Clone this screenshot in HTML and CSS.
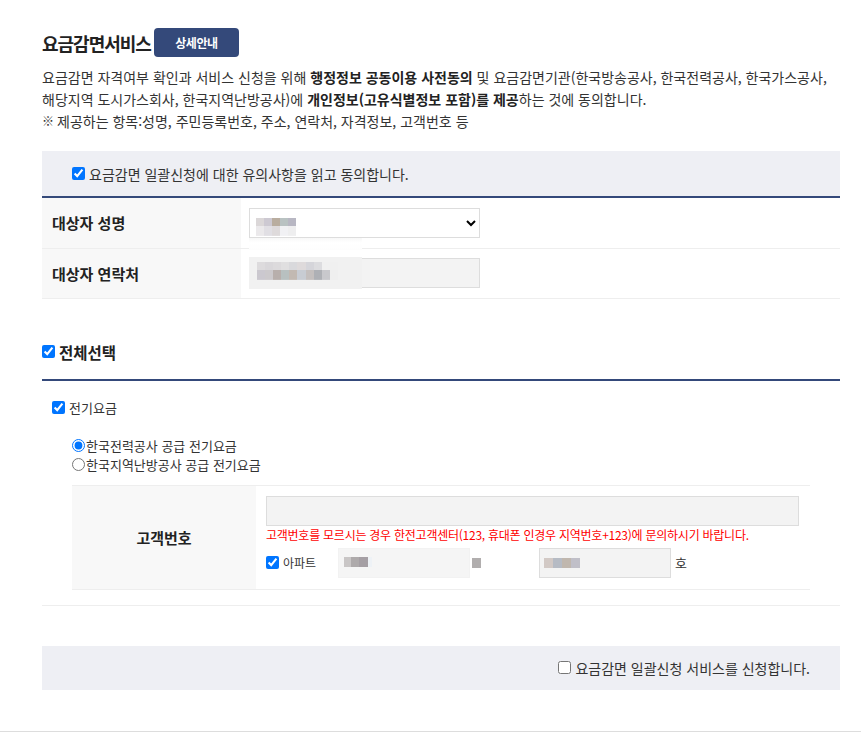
FILE: index.html
```html
<!DOCTYPE html>
<html lang="ko">
<head>
    <meta charset="UTF-8">
    <meta name="viewport" content="width=device-width, initial-scale=1.0">
    <title>요금감면서비스</title>
    <link rel="stylesheet" href="styles.css">
</head>
<body>

    <div class="page">
        <!-- 제목 -->
        <div class="title-row">
            <h2 class="title">요금감면서비스</h2>
            <a class="btn-detail">상세안내</a>
        </div>

        <p class="intro">요금감면 자격여부 확인과 서비스 신청을 위해 <b>행정정보 공동이용 사전동의</b> 및 요금감면기관(한국방송공사, 한국전력공사, 한국가스공사,<br>해당지역 도시가스회사, 한국지역난방공사)에 <b>개인정보(고유식별정보 포함)를 제공</b>하는 것에 동의합니다.<br><span class="note-mark">※</span>제공하는 항목:성명, 주민등록번호, 주소, 연락처, 자격정보, 고객번호 등</p>

        <div class="agree-box">
            <label class="check"><input type="checkbox" checked>요금감면 일괄신청에 대한 유의사항을 읽고 동의합니다.</label>
        </div>

        <!-- 대상자 정보 -->
        <table class="info-table">
            <tr>
                <th>대상자 성명</th>
                <td>
                    <div class="field-wrap">
                        <select class="field field-select"><option></option></select>
                        <span class="mosaic mosaic-name"></span>
                        <span class="smear smear-name"></span>
                    </div>
                </td>
            </tr>
            <tr>
                <th>대상자 연락처</th>
                <td>
                    <div class="field-wrap">
                        <input type="text" class="field">
                        <span class="smear smear-phone"></span>
                        <span class="mosaic mosaic-phone"></span>
                    </div>
                </td>
            </tr>
        </table>

        <!-- 전체선택 -->
        <div class="all-select">
            <label class="check"><input type="checkbox" checked>전체선택</label>
        </div>

        <div class="elec-check">
            <label class="check"><input type="checkbox" checked>전기요금</label>
        </div>

        <div class="radio-group">
            <label class="radio"><input type="radio" name="elec" checked>한국전력공사 공급 전기요금</label>
            <label class="radio"><input type="radio" name="elec">한국지역난방공사 공급 전기요금</label>
        </div>

        <table class="sub-table">
            <tr>
                <th>고객번호</th>
                <td>
                    <input type="text" class="field field-wide">
                    <p class="notice">고객번호를 모르시는 경우 한전고객센터(123, 휴대폰 인경우 지역번호+123)에 문의하시기 바랍니다.</p>
                    <div class="apt-row">
                        <label class="check apt-check"><input type="checkbox" checked>아파트</label>
                        <div class="field-wrap">
                            <input type="text" class="field field-apt field-blur">
                            <span class="mosaic mosaic-apt1"></span>
                        </div>
                        <span class="mosaic-dash"></span>
                        <div class="field-wrap apt-second">
                            <input type="text" class="field field-apt">
                            <span class="mosaic mosaic-apt2"></span>
                        </div>
                        <span class="ho">호</span>
                    </div>
                </td>
            </tr>
        </table>

        <hr class="divider">

        <div class="apply-box">
            <label class="check"><input type="checkbox">요금감면 일괄신청 서비스를 신청합니다.</label>
        </div>
    </div>

    <div class="footer-line"></div>

</body>
</html>
```

FILE: styles.css
```css
/* 기본 */
body {
    margin: 0;
    background: #fff;
    color: #333;
    font-family: "Noto Sans CJK KR", "Noto Sans", sans-serif;
    font-size: 14px;
}

.page {
    padding: 28px 21px 0 42px;
}

/* 제목 영역 */
.title-row {
    display: flex;
    align-items: center;
    gap: 3px;
    height: 29px;
}
.title {
    margin: 0;
    font-size: 18px;
    font-weight: bold;
    color: #222;
    letter-spacing: -1px;
}
.btn-detail {
    display: inline-flex;
    align-items: center;
    justify-content: center;
    width: 85px;
    height: 29px;
    background: #34497a;
    color: #fff;
    border-radius: 4px;
    font-size: 12px;
    font-weight: bold;
    letter-spacing: -0.5px;
}

.intro {
    margin: 9px 0 0;
    line-height: 22px;
    white-space: nowrap;
}
.intro b { color: #222; }
.note-mark {
    display: inline-block;
    width: 14px;
    height: 22px;
    margin-right: 1px;
    font-size: 12px;
    line-height: 22px;
    vertical-align: top;
}

/* 체크박스 / 라디오 */
.check, .radio {
    display: flex;
    align-items: center;
}
.check input {
    width: 13px;
    height: 13px;
    margin: 0 4px 0 0;
}
.radio input {
    width: 13px;
    height: 13px;
    margin: 0 1px 0 0;
}

/* 동의 박스 */
.agree-box {
    margin-top: 19px;
    height: 45px;
    display: flex;
    align-items: center;
    padding-left: 30px;
    background: #eeeff4;
    border-bottom: 2px solid #34497a;
}

/* 대상자 테이블 */
.info-table {
    width: 100%;
    border-collapse: collapse;
}
.info-table th {
    box-sizing: border-box;
    width: 199px;
    height: 50px;
    padding: 0 10px;
    background: #f8f8f8;
    text-align: left;
    font-size: 15px;
    color: #222;
    border-bottom: 1px solid #eee;
}
.info-table td {
    padding: 0 8px;
    border-bottom: 1px solid #eee;
}

.field {
    box-sizing: border-box;
    width: 231px;
    height: 30px;
    border: 1px solid #ddd;
    background: #f3f3f3;
    display: block;
    font-family: inherit;
}
.field-select {
    background: #fff;
}

.field-wrap {
    position: relative;
    width: fit-content;
}

/* 가려진 개인정보 */
.mosaic {
    position: absolute;
    pointer-events: none;
}
.mosaic-name {
    left: 7px;
    top: 10px;
    width: 46px;
    height: 18px;
    background:
        linear-gradient(90deg, #dbd7d8 0 18%, #cdc9d2 18% 34%, #b9ad9f 34% 52%, #b9c2c2 52% 70%, #b8b7c3 70% 88%, transparent 88%) top / 100% 45% no-repeat,
        linear-gradient(90deg, #ebe9eb 0 18%, #e1dfe4 18% 34%, #dedadb 34% 52%, #f1f1f4 52% 70%, #eeeeef 70% 88%, transparent 88%) bottom / 100% 55% no-repeat;
}
.mosaic-phone {
    left: 8px;
    top: 4px;
    width: 81px;
    height: 18px;
    background:
        linear-gradient(90deg, #dddbdd 0 10%, #d9d7da 10% 20%, #dcdadc 20% 30%, #e0dfe0 30% 40%, #d9d9dc 40% 50%, #dedadb 50% 60%, #d5d5da 60% 70%, #dcdcdf 70% 80%, #f0f0f0 80%) top / 100% 45% no-repeat,
        linear-gradient(90deg, #cbc8cf 0 10%, #ccc9cc 10% 20%, #b8afac 20% 30%, #b8c0c0 30% 40%, #c2b9b2 40% 50%, #c8ccd3 50% 60%, #c4bfbe 60% 70%, #aeb0b5 70% 80%, #c8c8cc 80% 90%, #efefef 90%) bottom / 100% 55% no-repeat;
}
.smear {
    position: absolute;
    pointer-events: none;
    left: 0;
    width: 113px;
}
.smear-name {
    top: 30px;
    height: 12px;
    background: linear-gradient(#f8f8f8, #fff 40%, #fdfdfd);
}
.smear-phone {
    top: -6px;
    height: 42px;
    background: linear-gradient(#fff 0 5px, #f1f1f1 5px 37px, #fff 37px);
}

/* 전체선택 */
.all-select {
    margin-top: 41px;
    height: 24px;
    padding-bottom: 15px;
    display: flex;
    align-items: center;
    font-size: 15.5px;
    font-weight: bold;
    color: #222;
    border-bottom: 2px solid #34497a;
}

.elec-check {
    margin-top: 17px;
    height: 20px;
    display: flex;
    align-items: center;
    padding-left: 10px;
    font-size: 13px;
}

.radio-group {
    margin-top: 18px;
    padding-left: 30px;
    line-height: 19px;
    font-size: 13px;
}

/* 고객번호 테이블 */
.sub-table {
    box-sizing: border-box;
    width: calc(100% - 60px);
    margin: 11px 30px 0;
    border-collapse: collapse;
    border-top: 1px solid #eee;
    border-bottom: 1px solid #eee;
}
.sub-table th {
    box-sizing: border-box;
    width: 184px;
    background: #f8f8f8;
    font-size: 15px;
    color: #222;
    text-align: center;
}
.sub-table td {
    padding: 10px 11px 11px 10px;
}
.field-wide {
    width: 100%;
}
.notice {
    margin: 1px 0 0;
    font-size: 12px;
    line-height: 16px;
    color: #f00;
    letter-spacing: -0.25px;
    white-space: nowrap;
}
.apt-row {
    margin-top: 5px;
    display: flex;
    align-items: center;
}
.apt-check {
    width: 72px;
    font-size: 12px;
    color: #333;
}
.field-apt {
    width: 132px;
}
.field-blur {
    background: #f5f5f5;
    border-color: #f2f2f2;
}
.mosaic-apt1 {
    left: 6px;
    top: 9px;
    width: 28px;
    height: 10px;
    background: linear-gradient(90deg, #c9c6c6 0 25%, #aeaaab 25% 55%, #a59fa4 55% 85%, #eef2f6 85%);
}
.mosaic-dash {
    width: 9px;
    height: 10px;
    margin-left: 2px;
    background: #b1aeae;
}
.apt-second {
    margin-left: 58px;
}
.mosaic-apt2 {
    left: 5px;
    top: 10px;
    width: 36px;
    height: 10px;
    background: linear-gradient(90deg, #d2c9c5 0 25%, #b6bbc4 25% 50%, #c0b7ae 50% 75%, #c0bfc8 75%);
}
.ho {
    margin-left: 4px;
    font-size: 13px;
}

.divider {
    margin: 15px 0 0;
    border: 0;
    border-top: 1px solid #eee;
}

/* 신청 박스 */
.apply-box {
    margin-top: 40px;
    height: 44px;
    display: flex;
    align-items: center;
    justify-content: flex-end;
    padding-right: 30px;
    background: #eeeff4;
}

.footer-line {
    margin-top: 41px;
    border-top: 1px solid #ddd;
}
```
